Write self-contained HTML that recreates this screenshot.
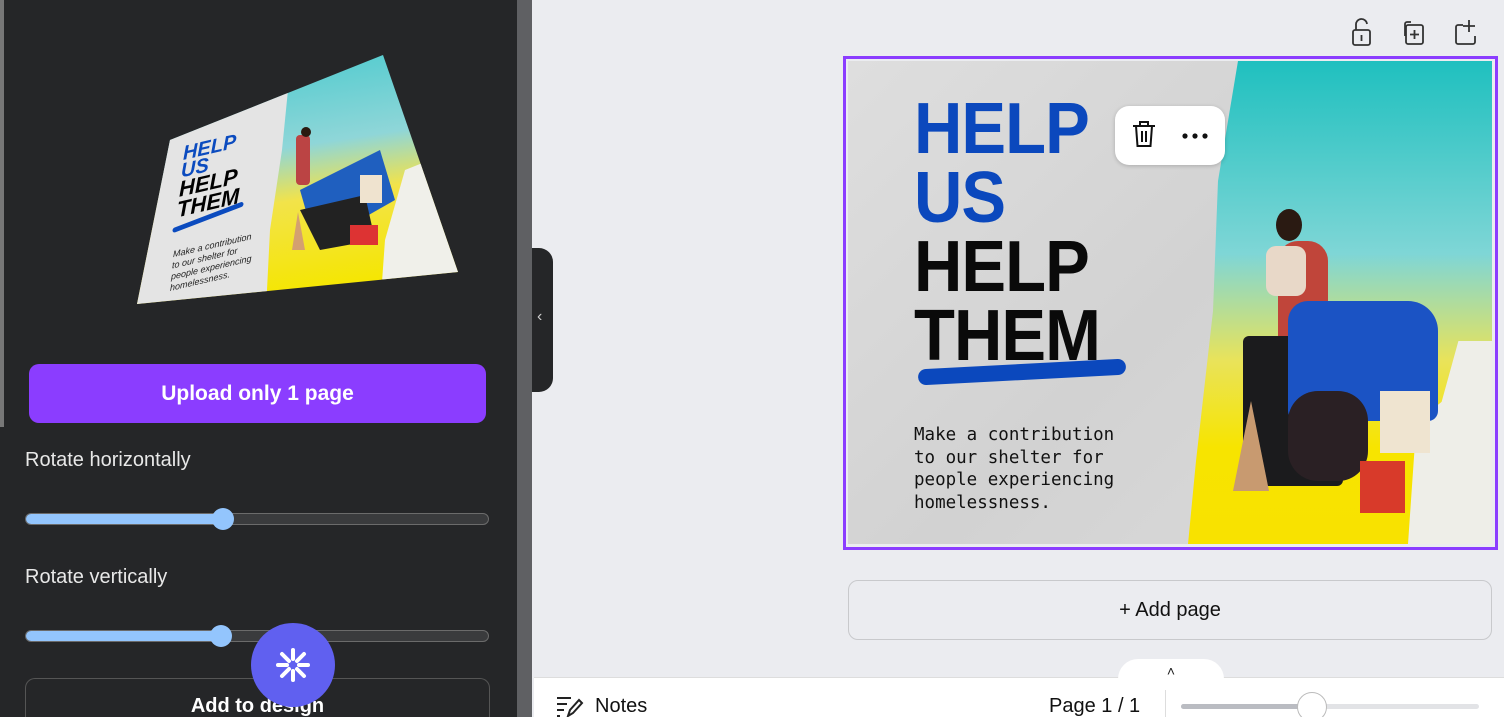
<!DOCTYPE html>
<html><head><meta charset="utf-8"><style>
*{margin:0;padding:0;box-sizing:border-box}
html,body{width:1504px;height:717px;overflow:hidden}
body{background:#ebecf0;font-family:"Liberation Sans",sans-serif;position:relative}
.abs{position:absolute}
#left{left:0;top:0;width:517px;height:717px;background:#252628}
#scroll{left:517px;top:0;width:15px;height:717px;background:#5f6063}
#handle{left:532px;top:248px;width:21px;height:144px;background:#252628;border-radius:0 14px 14px 0}
.btn{left:29px;top:364px;width:457px;height:59px;background:#8b3dff;border-radius:10px;color:#fff;font-weight:bold;font-size:21px;text-align:center;line-height:59px}
.lbl{color:#e8e8e8;font-size:20px;left:25px}
.track{left:25px;width:464px;height:12px;border-radius:6px;background:#3a3b3d;border:1px solid #6b6b6b}
.fill{position:absolute;left:0;top:0;height:10px;border-radius:5px;background:#93c5fd}
.knob{width:22px;height:22px;border-radius:50%;background:#93c5fd;top:-6px}
#design{left:848px;top:61px;width:644px;height:483px;overflow:hidden;background:#d4d4d4}
.big{font-family:"Liberation Sans",sans-serif;font-weight:900;font-size:72px;line-height:69px;letter-spacing:-1px;transform:scaleX(0.93);transform-origin:left;white-space:nowrap}
</style></head><body>
<div id="left" class="abs"></div>
<div id="scroll" class="abs"></div>
<div id="handle" class="abs"><div style="color:#ccc;font-size:16px;position:absolute;left:5px;top:60px">‹</div></div>

<svg class="abs" style="left:0;top:0" width="517" height="340">
<defs>
<linearGradient id="g1" x1="0" y1="0" x2="0.2" y2="1"><stop offset="0" stop-color="#3ec8cc"/><stop offset="0.45" stop-color="#8fd6d8"/><stop offset="0.65" stop-color="#f2e34a"/><stop offset="1" stop-color="#f5e600"/></linearGradient>
<clipPath id="cp"><polygon points="170,140 383,55 458,272 137,304"/></clipPath>
</defs>
<g clip-path="url(#cp)">
<rect x="130" y="50" width="340" height="260" fill="url(#g1)"/>
<polygon points="130,50 292,50 282,150 270,230 266,310 130,310" fill="#e4e4e4"/>
<polygon points="405,170 430,160 470,310 380,310 385,240" fill="#f0f0ea"/>
<path d="M300 190 L380 150 L395 200 L360 220 L310 225Z" fill="#1f5fbf"/>
<path d="M300 210 L365 195 L375 240 L320 250Z" fill="#222"/>
<rect x="296" y="135" width="14" height="50" fill="#b44" rx="4"/>
<circle cx="306" cy="132" r="5" fill="#2a1a10"/>
<rect x="360" y="175" width="22" height="28" fill="#efe3cf"/>
<polygon points="298,212 305,250 292,250" fill="#d4a070"/>
<rect x="350" y="225" width="28" height="20" fill="#d33"/>
</g>
<g transform="translate(183,160) skewY(-13)" font-family="Liberation Sans" font-weight="900" font-style="italic">
<text x="0" y="0" font-size="20" fill="#0b4bbf">HELP</text>
<text x="-2" y="17" font-size="20" fill="#0b4bbf">US</text>
<text x="-4" y="36" font-size="22" fill="#000">HELP</text>
<text x="-6" y="56" font-size="22" fill="#000">THEM</text>
<path d="M-8 68 L58 58" stroke="#0b4bbf" stroke-width="5" stroke-linecap="round"/>
<text x="-10" y="95" font-size="9" font-weight="normal" fill="#222">Make a contribution</text>
<text x="-11" y="106" font-size="9" font-weight="normal" fill="#222">to our shelter for</text>
<text x="-12" y="117" font-size="9" font-weight="normal" fill="#222">people experiencing</text>
<text x="-13" y="128" font-size="9" font-weight="normal" fill="#222">homelessness.</text>
</g>
</svg>
<div class="abs" style="left:0;top:0;width:4px;height:427px;background:#777"></div>

<div class="abs btn">Upload only 1 page</div>
<div class="abs lbl" style="top:449px">Rotate horizontally</div>
<div class="abs track" style="top:513px"><div class="fill" style="width:197px"></div><div class="abs knob" style="left:186px"></div></div>
<div class="abs lbl" style="top:566px">Rotate vertically</div>
<div class="abs track" style="top:630px"><div class="fill" style="width:195px"></div><div class="abs knob" style="left:184px"></div></div>
<div class="abs" style="left:25px;top:678px;width:465px;height:39px;border:1px solid #555;border-bottom:none;border-radius:10px 10px 0 0;color:#fff;font-weight:bold;font-size:20px;text-align:center;padding-top:16px;overflow:hidden">Add to design</div>
<div class="abs" style="left:251px;top:623px;width:84px;height:84px;border-radius:50%;background:#6060f0">
<svg width="84" height="84"><g stroke="#fff" stroke-width="4" stroke-linecap="round" transform="translate(42,42)">
<line x1="0" y1="-15" x2="0" y2="-6"/><line x1="0" y1="6" x2="0" y2="15"/><line x1="-15" y1="0" x2="-6" y2="0"/><line x1="6" y1="0" x2="15" y2="0"/>
<line x1="-11" y1="-11" x2="-4" y2="-4"/><line x1="4" y1="4" x2="11" y2="11"/><line x1="11" y1="-11" x2="4" y2="-4"/><line x1="-4" y1="4" x2="-11" y2="11"/></g></svg></div>

<svg class="abs" style="left:1350px;top:18px" width="140" height="32" fill="none" stroke="#333" stroke-width="1.8">
<rect x="3" y="12" width="17" height="15" rx="2"/><path d="M6 12 V7 a5.5 5.5 0 0 1 11 -1"/><line x1="11.5" y1="17" x2="11.5" y2="23"/>
<rect x="56" y="7" width="17" height="19" rx="2"/><path d="M61 4 H57 a2 2 0 0 0 -2 2 V18"/><path d="M64.5 12 v9 M60 16.5 h9"/>
<path d="M113 7 H108 a2 2 0 0 0 -2 2 V24 a2 2 0 0 0 2 2 H123 a2 2 0 0 0 2 -2 V18"/><path d="M119 2 v12 M113 8 h12"/>
</svg>

<div class="abs" style="left:843px;top:56px;width:655px;height:494px;border:3px solid #8b3dff"></div>
<div id="design" class="abs">
<div class="abs" style="left:0;top:0;width:644px;height:483px;background:linear-gradient(135deg,#dedede,#d2d2d2 50%,#dcdcdc)"></div>
<div class="abs" style="left:340px;top:0;width:304px;height:483px;background:linear-gradient(180deg,#1fc0bf 0%,#7fd6d6 40%,#e9e35a 62%,#f7e400 80%,#f8e200 100%);clip-path:polygon(50px 0,304px 0,304px 483px,0 483px,8px 400px,25px 250px,30px 120px)"></div>
<div class="abs" style="left:560px;top:280px;width:84px;height:203px;background:#eeeee8;clip-path:polygon(60% 0,100% 0,100% 100%,0 100%,10% 40%,40% 30%)"></div>
<div class="abs" style="left:430px;top:180px;width:50px;height:120px;background:#c0453a;border-radius:20px 20px 4px 4px"></div>
<div class="abs" style="left:418px;top:185px;width:40px;height:50px;background:#e8d8c8;border-radius:10px"></div>
<div class="abs" style="left:428px;top:148px;width:26px;height:32px;background:#2a1a12;border-radius:50%"></div>
<div class="abs" style="left:395px;top:275px;width:100px;height:150px;background:#1b1b1d;border-radius:6px"></div>
<div class="abs" style="left:440px;top:240px;width:150px;height:120px;background:#1b53c4;border-radius:20px 30px 10px 10px"></div>
<div class="abs" style="left:440px;top:330px;width:80px;height:90px;background:#2a2024;border-radius:30px"></div>
<div class="abs" style="left:532px;top:330px;width:50px;height:62px;background:#efe4d0"></div>
<div class="abs" style="left:512px;top:400px;width:45px;height:52px;background:#d83a2a"></div>
<div class="abs" style="left:385px;top:340px;width:36px;height:90px;background:#c89a70;clip-path:polygon(50% 0,100% 100%,0 100%)"></div>
<div class="abs" style="left:66px;top:34px;color:#0b48bd"><div class="big">HELP</div><div class="big">US</div><div class="big" style="color:#0a0a0a">HELP</div><div class="big" style="color:#0a0a0a">THEM</div></div>
<div class="abs" style="left:70px;top:303px;width:208px;height:16px;background:#0b48bd;border-radius:10px;transform:rotate(-3deg)"></div>
<div class="abs" style="left:66px;top:363px;font-family:'DejaVu Sans Mono','Liberation Mono',monospace;font-size:17.5px;line-height:22.5px;color:#111">Make a contribution<br>to our shelter for<br>people experiencing<br>homelessness.</div>
</div>
<div class="abs" style="left:1115px;top:106px;width:110px;height:59px;background:#fff;border-radius:14px;box-shadow:0 1px 4px rgba(0,0,0,.2)">
<svg width="110" height="59" fill="none" stroke="#111" stroke-width="2"><path d="M18 20 h22 M25 20 v-4 h8 v4 M21 20 l1.5 20 h13 l1.5 -20 M27 25 v11 M31 25 v11"/><g fill="#111" stroke="none"><circle cx="70" cy="30" r="2.6"/><circle cx="80" cy="30" r="2.6"/><circle cx="90" cy="30" r="2.6"/></g></svg></div>

<div class="abs" style="left:848px;top:580px;width:644px;height:60px;border:1px solid #c8c9cc;border-radius:10px;text-align:center;line-height:58px;font-size:20px;color:#111">+ Add page</div>

<div class="abs" style="left:534px;top:677px;width:970px;height:40px;background:#fff;border-top:1px solid #ddd"></div>
<div class="abs" style="left:1118px;top:659px;width:106px;height:20px;background:#fff;border-radius:30px 30px 0 0;text-align:center;font-size:14px;color:#222;line-height:24px">˄</div>
<svg class="abs" style="left:556px;top:695px" width="30" height="22" fill="none" stroke="#222" stroke-width="2"><path d="M1 3 h14 M1 9 h10 M1 15 h7 M1 21 h3 M12 21 l2-6 l9-10 l3 3 l-9 10z"/></svg>
<div class="abs" style="left:595px;top:695px;font-size:20px;color:#111">Notes</div>
<div class="abs" style="left:1049px;top:695px;font-size:20px;color:#111">Page 1 / 1</div>
<div class="abs" style="left:1165px;top:690px;width:1px;height:27px;background:#ddd"></div>
<div class="abs" style="left:1181px;top:704px;width:298px;height:5px;background:#e2e3e6;border-radius:3px"><div style="width:130px;height:5px;background:#babcc2;border-radius:3px"></div></div>
<div class="abs" style="left:1297px;top:692px;width:30px;height:30px;border-radius:50%;background:#fff;border:1px solid #bbb"></div>
</body></html>
